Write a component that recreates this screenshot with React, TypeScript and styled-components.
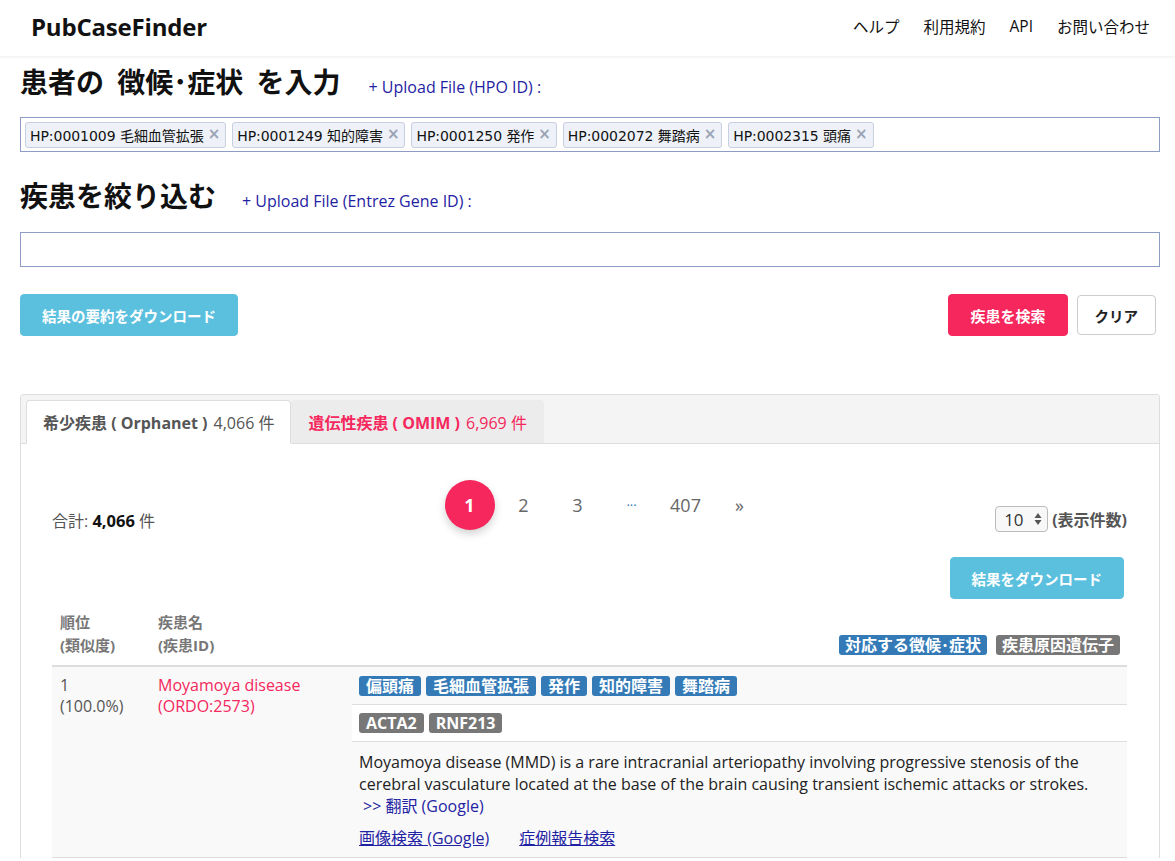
import React from "react";
import styled, { createGlobalStyle } from "styled-components";

const PINK = "#f5275d";
const LINK = "#1f23a3";

const Global = createGlobalStyle`
  html, body { margin: 0; padding: 0; background: #fff; }
  body {
    font-family: "Open Sans", "Noto Sans CJK JP", sans-serif;
    color: #222;
  }
  * { box-sizing: border-box; }
`;

const Header = styled.header`
  height: 57px;
  display: flex;
  align-items: center;
  justify-content: space-between;
  padding: 0 25px 4px 31px;
  box-shadow: 0 1px 2px rgba(0, 0, 0, 0.04);
  border-bottom: 1px solid #f4f4f4;
`;

const Logo = styled.div`
  font-size: 24px;
  font-weight: 700;
  color: #111;
  letter-spacing: -0.2px;
`;

const Nav = styled.nav`
  display: flex;
  gap: 24px;
  font-size: 15.5px;
  color: #111;
`;

const Main = styled.main`
  padding: 0 15px 0 20px;
`;

const TitleRow = styled.div<{ $top: number }>`
  display: flex;
  align-items: baseline;
  margin-top: ${(p) => p.$top}px;
`;

const Title = styled.h1`
  margin: 0;
  font-size: 28px;
  line-height: 32px;
  font-weight: 700;
  color: #111;
  word-spacing: 6px;
`;

const UploadLink = styled.a<{ $gap: number }>`
  margin-left: ${(p) => p.$gap}px;
  font-size: 16px;
  color: ${LINK};
  text-decoration: none;
`;

const TagBox = styled.div<{ $top: number }>`
  margin-top: ${(p) => p.$top}px;
  height: 35px;
  border: 1px solid #8f9dc4;
  display: flex;
  align-items: center;
  gap: 6px;
  padding: 0 4px;
`;

const Tag = styled.span`
  height: 26px;
  display: inline-flex;
  align-items: center;
  gap: 4px;
  padding: 0 5px 0 4px;
  background: #eef1f7;
  border: 1px solid #c7cfe0;
  border-radius: 3px;
  font-family: "DejaVu Sans", "Noto Sans CJK JP", sans-serif;
  font-size: 14px;
  letter-spacing: -0.05px;
  color: #111;
`;

const TagX = styled.span`
  color: #9aa3b5;
  font-weight: 700;
  font-size: 15px;
  line-height: 1;
`;

const ButtonRow = styled.div`
  margin-top: 27px;
  display: flex;
  align-items: center;
  justify-content: space-between;
`;

const RightButtons = styled.div`
  display: flex;
  gap: 9px;
  align-items: center;
  margin-right: 4px;
`;

const Btn = styled.button<{ $kind: "info" | "danger" | "plain"; $size?: number }>`
  height: ${(p) => (p.$kind === "plain" ? 40 : 42)}px;
  padding: 0 ${(p) => (p.$kind === "plain" ? 17 : 21)}px;
  border-radius: 4px;
  font-family: inherit;
  font-size: ${(p) => p.$size ?? 15}px;
  font-weight: 700;
  cursor: pointer;
  border: 1px solid
    ${(p) => (p.$kind === "info" ? "#5bc0de" : p.$kind === "danger" ? PINK : "#ccc")};
  background: ${(p) => (p.$kind === "info" ? "#5bc0de" : p.$kind === "danger" ? PINK : "#fff")};
  color: ${(p) => (p.$kind === "plain" ? "#222" : "#fff")};
`;

const Panel = styled.section`
  margin-top: 58px;
  border: 1px solid #ddd;
  border-radius: 4px 4px 0 0;
  border-bottom: none;
`;

const TabBar = styled.div`
  background: #f4f4f4;
  padding: 5px 0 0 5px;
  display: flex;
  border-bottom: 1px solid #ddd;
  border-radius: 4px 4px 0 0;
`;

const Tab = styled.div<{ $active?: boolean }>`
  height: 44px;
  margin-bottom: -1px;
  display: flex;
  align-items: center;
  gap: 6px;
  padding: 0 16px;
  font-size: 16px;
  border-radius: 4px 4px 0 0;
  border: 1px solid ${(p) => (p.$active ? "#ddd" : "transparent")};
  border-bottom: 1px solid ${(p) => (p.$active ? "#fff" : "#ddd")};
  background: ${(p) => (p.$active ? "#fff" : "#ececec")};
  color: ${(p) => (p.$active ? "#555" : PINK)};
`;

const TabLabel = styled.b`
  font-weight: 700;
`;

const PanelBody = styled.div`
  padding: 36px 32px 0 31px;
`;

const ListHead = styled.div`
  display: grid;
  grid-template-columns: 1fr auto 1fr;
  align-items: end;
`;

const Total = styled.div`
  font-size: 16px;
  color: #555;
  margin-bottom: -2px;
`;

const TotalNum = styled.b`
  color: #111;
  font-size: 16.5px;
`;

const Pager = styled.div`
  display: flex;
  gap: 4px;
  margin-left: 30px;
  align-self: start;
`;

const PageItem = styled.span<{ $active?: boolean; $dots?: boolean }>`
  width: 50px;
  height: 50px;
  border-radius: 50%;
  display: flex;
  align-items: center;
  justify-content: center;
  font-size: ${(p) => (p.$dots ? 13 : 18)}px;
  color: ${(p) => (p.$active ? "#fff" : p.$dots ? "#337ab7" : "#666")};
  background: ${(p) => (p.$active ? PINK : "transparent")};
  font-weight: ${(p) => (p.$active ? 700 : 400)};
  box-shadow: ${(p) => (p.$active ? "0 4px 8px rgba(0,0,0,0.18)" : "none")};
`;

const PageSize = styled.div`
  justify-self: end;
  display: flex;
  align-items: center;
  gap: 4px;
  font-size: 16px;
  font-weight: 700;
  color: #555;
  margin-bottom: -2px;
`;

const Select = styled.div`
  width: 53px;
  height: 26px;
  border: 1px solid #bbb;
  border-radius: 4px;
  background: #f8f8f8;
  display: flex;
  align-items: center;
  justify-content: space-between;
  padding: 0 5px 0 8px;
  font-size: 17px;
  font-weight: 400;
  color: #333;
`;

const DownloadRow = styled.div`
  display: flex;
  justify-content: flex-end;
  margin-top: 27px;
  padding-right: 3px;
`;

const Table = styled.table`
  width: 100%;
  margin-top: 12px;
  border-collapse: collapse;
`;

const Th = styled.th<{ $w?: number; $right?: boolean }>`
  width: ${(p) => (p.$w ? `${p.$w}px` : "auto")};
  text-align: ${(p) => (p.$right ? "right" : "left")};
  vertical-align: bottom;
  padding: 0 7px 8px 8px;
  font-size: 15px;
  line-height: 23px;
  font-weight: 700;
  color: #777;
  border-bottom: 2px solid #ddd;
`;

const Td = styled.td<{ $pink?: boolean; $w?: number }>`
  width: ${(p) => (p.$w ? `${p.$w}px` : "auto")};
  vertical-align: top;
  padding: 8px 7px 0 8px;
  font-size: 16px;
  line-height: 21px;
  color: ${(p) => (p.$pink ? PINK : "#555")};
  background: #f9f9f9;
  border-bottom: 1px solid #ddd;
`;

const SubCell = styled.td`
  padding: 0;
  vertical-align: top;
  background: #f9f9f9;
  border-bottom: 1px solid #ddd;
`;

const SubRow = styled.div<{ $white?: boolean; $h?: number }>`
  min-height: ${(p) => p.$h ?? 0}px;
  display: flex;
  flex-wrap: wrap;
  align-items: center;
  gap: 5px;
  padding: 0 7px;
  background: ${(p) => (p.$white ? "#fff" : "#f9f9f9")};
  & + & {
    border-top: 1px solid #ddd;
  }
`;

const DescBlock = styled.div`
  padding: 9px 7px 8px;
  background: #f9f9f9;
  border-top: 1px solid #ddd;
  font-size: 16px;
  line-height: 22px;
  color: #222;
`;

const Badge = styled.span<{ $tone: "blue" | "grey"; $pad?: number }>`
  display: inline-block;
  padding: 2px ${(p) => p.$pad ?? 7}px 2px;
  border-radius: 3px;
  font-size: 16px;
  line-height: 1;
  font-weight: 700;
  color: #fff;
  background: ${(p) => (p.$tone === "blue" ? "#337ab7" : "#777")};
`;

const HeadBadges = styled.div`
  display: inline-flex;
  gap: 9px;
`;

const Link = styled.a<{ $under?: boolean }>`
  color: ${LINK};
  text-decoration: ${(p) => (p.$under ? "underline" : "none")};
`;

const TransLine = styled.div`
  padding-left: 4px;
`;

const LinksLine = styled.div`
  display: flex;
  gap: 30px;
  margin-top: 10px;
`;

const tags = [
  "HP:0001009 毛細血管拡張",
  "HP:0001249 知的障害",
  "HP:0001250 発作",
  "HP:0002072 舞踏病",
  "HP:0002315 頭痛",
];

const SpinArrows = () => (
  <svg width="8" height="14" viewBox="0 0 8 14">
    <path d="M4 1 L7.5 6 L0.5 6 Z" fill="#555" />
    <path d="M4 13 L7.5 8 L0.5 8 Z" fill="#555" />
  </svg>
);

export default function App() {
  return (
    <>
      <Global />
      <Header>
        <Logo>PubCaseFinder</Logo>
        <Nav>
          <span>ヘルプ</span>
          <span>利用規約</span>
          <span>API</span>
          <span>お問い合わせ</span>
        </Nav>
      </Header>
      <Main>
        <TitleRow $top={9}>
          <Title>患者の 徴候･症状 を入力</Title>
          <UploadLink $gap={28}>+ Upload File (HPO ID) :</UploadLink>
        </TitleRow>
        <TagBox $top={19}>
          {tags.map((t) => (
            <Tag key={t}>
              {t}
              <TagX>×</TagX>
            </Tag>
          ))}
        </TagBox>
        <TitleRow $top={28}>
          <Title>疾患を絞り込む</Title>
          <UploadLink $gap={26}>+ Upload File (Entrez Gene ID) :</UploadLink>
        </TitleRow>
        <TagBox $top={20} />
        <ButtonRow>
          <Btn $kind="info" $size={14.5}>結果の要約をダウンロード</Btn>
          <RightButtons>
            <Btn $kind="danger">疾患を検索</Btn>
            <Btn $kind="plain" $size={14.5}>クリア</Btn>
          </RightButtons>
        </ButtonRow>
        <Panel>
          <TabBar>
            <Tab $active>
              <TabLabel>希少疾患 ( Orphanet )</TabLabel>
              <span>4,066 件</span>
            </Tab>
            <Tab>
              <TabLabel>遺伝性疾患 ( OMIM )</TabLabel>
              <span>6,969 件</span>
            </Tab>
          </TabBar>
          <PanelBody>
            <ListHead>
              <Total>
                合計: <TotalNum>4,066</TotalNum> 件
              </Total>
              <Pager>
                <PageItem $active>1</PageItem>
                <PageItem>2</PageItem>
                <PageItem>3</PageItem>
                <PageItem $dots>···</PageItem>
                <PageItem>407</PageItem>
                <PageItem>»</PageItem>
              </Pager>
              <PageSize>
                <Select>
                  10
                  <SpinArrows />
                </Select>
                (表示件数)
              </PageSize>
            </ListHead>
            <DownloadRow>
              <Btn $kind="info" $size={14.5}>結果をダウンロード</Btn>
            </DownloadRow>
            <Table>
              <thead>
                <tr>
                  <Th $w={98}>
                    順位
                    <br />
                    (類似度)
                  </Th>
                  <Th $w={202}>
                    疾患名
                    <br />
                    (疾患ID)
                  </Th>
                  <Th $right>
                    <HeadBadges>
                      <Badge $tone="blue" $pad={6}>対応する徴候･症状</Badge>
                      <Badge $tone="grey" $pad={6}>疾患原因遺伝子</Badge>
                    </HeadBadges>
                  </Th>
                </tr>
              </thead>
              <tbody>
                <tr>
                  <Td>
                    1
                    <br />
                    (100.0%)
                  </Td>
                  <Td $pink>
                    Moyamoya disease
                    <br />
                    (ORDO:2573)
                  </Td>
                  <SubCell>
                    <SubRow $h={37}>
                      <Badge $tone="blue">偏頭痛</Badge>
                      <Badge $tone="blue">毛細血管拡張</Badge>
                      <Badge $tone="blue">発作</Badge>
                      <Badge $tone="blue">知的障害</Badge>
                      <Badge $tone="blue">舞踏病</Badge>
                    </SubRow>
                    <SubRow $white $h={37}>
                      <Badge $tone="grey">ACTA2</Badge>
                      <Badge $tone="grey">RNF213</Badge>
                    </SubRow>
                    <DescBlock>
                      Moyamoya disease (MMD) is a rare intracranial arteriopathy involving
                      progressive stenosis of the cerebral vasculature located at the base of the
                      brain causing transient ischemic attacks or strokes.
                      <TransLine>
                        <Link>&gt;&gt; 翻訳 (Google)</Link>
                      </TransLine>
                      <LinksLine>
                        <Link $under>画像検索 (Google)</Link>
                        <Link $under>症例報告検索</Link>
                      </LinksLine>
                    </DescBlock>
                  </SubCell>
                </tr>
              </tbody>
            </Table>
          </PanelBody>
        </Panel>
      </Main>
    </>
  );
}
